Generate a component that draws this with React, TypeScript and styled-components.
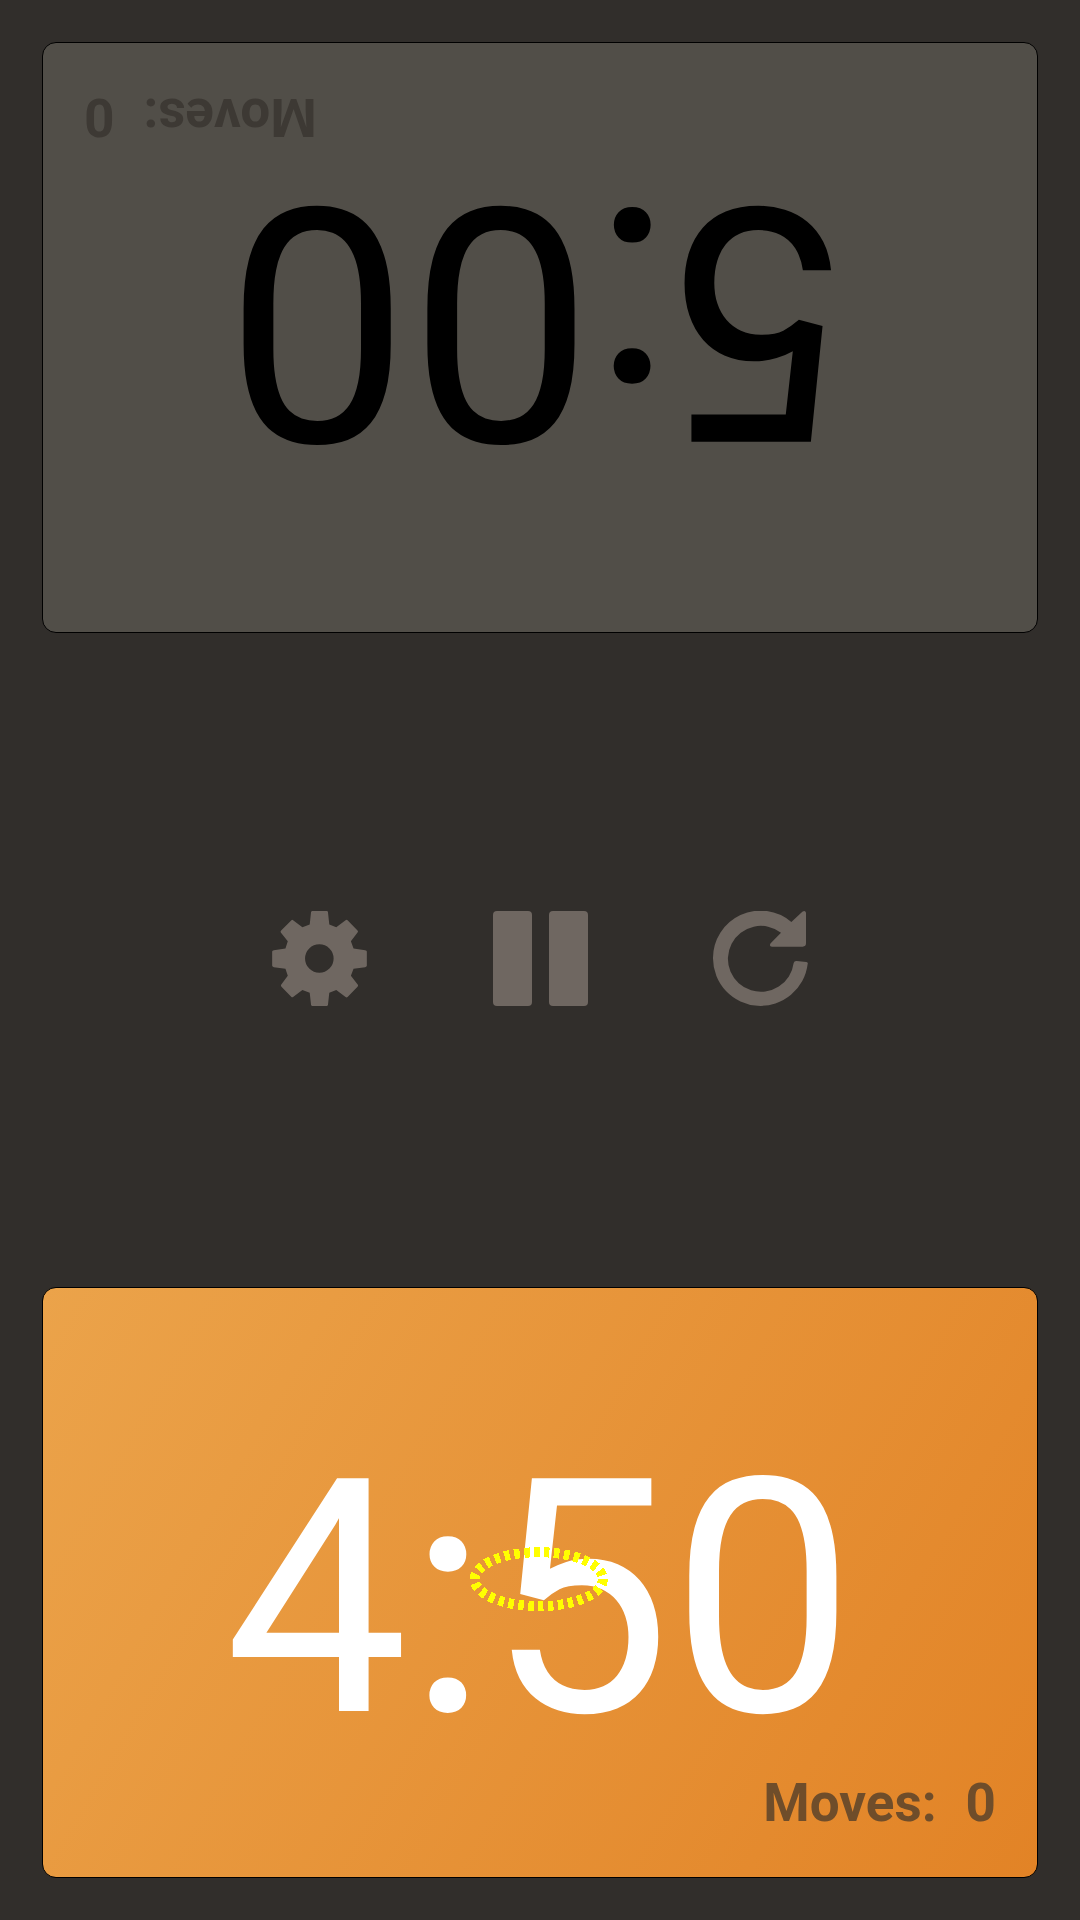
import React from 'react';
import styled, { createGlobalStyle } from 'styled-components';

const Global = createGlobalStyle`
  * { box-sizing: border-box; }
  body { margin: 0; background: #312e2b; font-family: Roboto, "Liberation Sans", sans-serif; }
`;
const Screen = styled.main`
  height: 1920px;
  padding: 42px;
  display: flex;
  flex-direction: column;
  justify-content: space-between;
  background: #312e2b;
`;
const Panel = styled.section<{ $active?: boolean }>`
  position: relative;
  height: 591px;
  padding: 32px 1px 0 0;
  border: 1px solid #000;
  border-radius: 14px;
  display: flex;
  align-items: center;
  justify-content: center;
  color: ${p => (p.$active ? '#fff' : '#000')};
  background: ${p => (p.$active ? 'linear-gradient(120deg, #eba34a, #e28326)' : '#514e48')};
  transform: ${p => (p.$active ? 'none' : 'rotate(180deg)')};
`;
const Time = styled.div`
  font-size: 327.5px;
  line-height: 328px;
  letter-spacing: -0.3px;
  white-space: nowrap;
`;
const Moves = styled.div<{ $active?: boolean }>`
  position: absolute;
  right: 41px;
  bottom: 43px;
  display: flex;
  gap: 29px;
  font-size: 53px;
  line-height: 62px;
  font-weight: 700;
  color: ${p => (p.$active ? '#6f4d2a' : '#3d3934')};
`;
const Controls = styled.nav`
  display: flex;
  justify-content: center;
  gap: 125.5px;
  margin-bottom: 3px;
`;
const Control = styled.button`
  width: 95px;
  height: 95px;
  padding: 0;
  border: 0;
  background: none;
  color: #6f6761;
  svg { display: block; width: 95px; height: 95px; fill: currentColor; }
`;
const Marker = styled.svg`
  position: absolute;
  left: 426px;
  top: 258px;
  width: 140px;
  height: 66px;
`;

export default function App() {
  return (
    <Screen>
      <Global />
      <Panel>
        <Time>5:00</Time>
        <Moves><span>Moves:</span><span>0</span></Moves>
      </Panel>
      <Controls>
        <Control aria-label="Settings">
          <svg viewBox="36 33 285 286"><path fillRule="evenodd" d="M157 33H200Q204 33 204 37L208 74L229 82L257 61Q260 58 263 61L293 92Q296 95 293 98L273 124L281 146L316 151Q321 152 321 155V198Q321 201 316 202L281 207L273 228L294 255Q296 258 293 261L263 292Q260 295 257 292L229 271L208 279L204 315Q203 319 200 319H157Q154 319 153 315L149 279L127 271L99 292Q96 294 94 292L64 261Q61 258 63 255L83 228L76 207L41 202Q36 201 36 198V155Q36 152 41 151L76 146L83 124L62 98Q60 95 63 92L94 61Q96 58 99 61L127 82L149 74L153 37Q154 33 157 33ZM178 133A43 43 0 1 0 178 219A43 43 0 1 0 178 133Z" /></svg>
        </Control>
        <Control aria-label="Pause">
          <svg viewBox="0 0 95 95"><rect width="39" height="95" rx="4" /><rect x="56" width="39" height="95" rx="4" /></svg>
        </Control>
        <Control aria-label="Restart">
          <svg viewBox="39 33 285 285"><path d="M274 66L307 35Q316 30 318 38V130Q318 140 308 140H216Q206 139 212 130L243 98A99 99 0 1 0 281 189Q283 182 290 183L319 186Q325 187 323 192A142.5 142.5 0 0 1 39 175.5A142.5 142.5 0 0 1 274 66Z" /></svg>
        </Control>
      </Controls>
      <Panel $active>
        <Time>4:50</Time>
        <Moves $active><span>Moves:</span><span>0</span></Moves>
        <Marker viewBox="0 0 140 66"><ellipse cx="69.7" cy="33.2" rx="64.2" ry="27" fill="none" stroke="#ff0" strokeWidth="10" strokeDasharray="5.5 4.45" shapeRendering="crispEdges" /></Marker>
      </Panel>
    </Screen>
  );
}
